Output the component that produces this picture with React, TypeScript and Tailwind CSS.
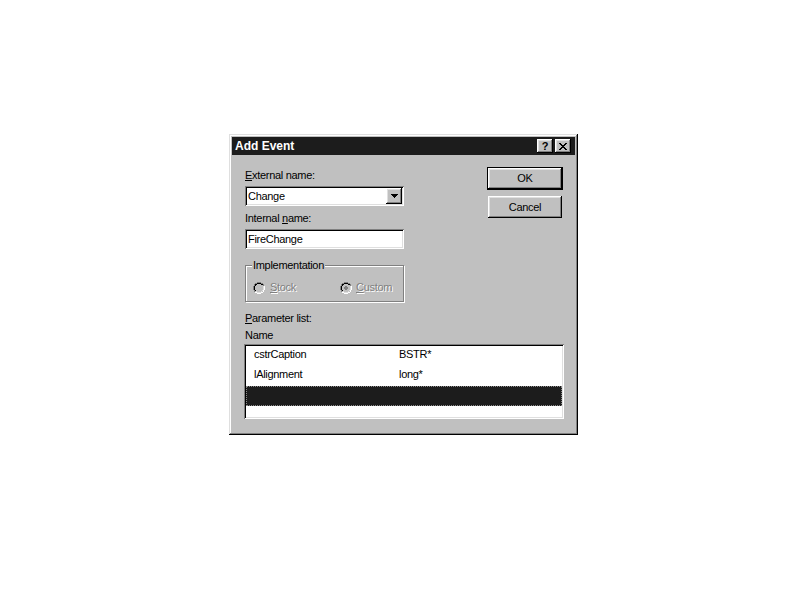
import React from "react";

const raised =
  "shadow-[inset_-1px_-1px_0_#000,inset_1px_1px_0_#fff,inset_-2px_-2px_0_#808080,inset_2px_2px_0_#dfdfdf]";
const sunken =
  "shadow-[inset_1px_1px_0_#808080,inset_-1px_-1px_0_#fff,inset_2px_2px_0_#000,inset_-2px_-2px_0_#dfdfdf]";

function Radio({ checked }: { checked?: boolean }) {
  return (
    <svg width="12" height="12" viewBox="0 0 12 12" shapeRendering="crispEdges">
      <path d="M4 0h4v1H4zM2 1h2v1H2zM8 1h2v1H8zM1 2h1v2H1zM0 4h1v4H0zM1 8h1v2H1z" fill="#808080" />
      <path d="M10 2h1v2h-1z" fill="#808080" />
      <path d="M4 1h4v1H4zM2 2h2v1H2zM8 2h2v1H8zM2 3h1v1H2zM1 4h1v4H1zM2 8h1v1H2z" fill="#000" />
      <path d="M11 4h1v4h-1zM10 8h1v2h-1zM8 10h2v1H8zM4 11h4v1H4zM2 10h2v1H2z" fill="#fff" />
      <path d="M10 4h1v4h-1zM9 8h1v1H9zM8 9h1v1H8zM4 10h4v1H4zM3 9h1v1H3z" fill="#dfdfdf" />
      <path d="M4 2h4v1H4zM3 3h6v1H3zM2 4h8v4H2zM3 8h6v1H3zM4 9h4v1H4z" fill="#c0c0c0" />
      {checked && <path d="M5 4h2v1H5zM4 5h4v2H4zM5 7h2v1H5z" fill="#808080" />}
    </svg>
  );
}

export default function App() {
  return (
    <div
      className="min-h-[600px] w-[800px] bg-white pl-[229px] pt-[134px] text-[11px] leading-[13px] tracking-[-0.3px] text-black"
      style={{ fontFamily: '"Liberation Sans", Arial, sans-serif' }}
    >
      <div className="flex h-[301px] w-[349px] flex-col bg-[#c0c0c0] p-[3px] shadow-[inset_-1px_-1px_0_#000,inset_1px_1px_0_#dfdfdf,inset_-2px_-2px_0_#808080,inset_2px_2px_0_#fff]">
        {/* Title bar */}
        <div className="flex h-[18px] items-center justify-between bg-[#1c1c1c] pl-[3px] pr-[4px]">
          <span className="text-[12px] font-bold tracking-normal text-white">Add Event</span>
          <div className="flex gap-[2px]">
            <div className={`flex h-[14px] w-[16px] items-center justify-center bg-[#c0c0c0] ${raised}`}>
              <span className="text-[11px] font-bold leading-[11px] tracking-normal">?</span>
            </div>
            <div className={`flex h-[14px] w-[16px] items-center justify-center bg-[#c0c0c0] ${raised}`}>
              <svg width="8" height="7" viewBox="0 0 8 7" shapeRendering="crispEdges">
                <path
                  d="M0 0h2v1H0zM6 0h2v1H6zM1 1h2v1H1zM5 1h2v1H5zM2 2h4v1H2zM3 3h2v1H3zM2 4h4v1H2zM1 5h2v1H1zM5 5h2v1H5zM0 6h2v1H0zM6 6h2v1H6z"
                  fill="#000"
                />
              </svg>
            </div>
          </div>
        </div>

        {/* Body */}
        <div className="flex flex-col pl-[12px] pr-[12px]">
          <div className="flex">
            {/* Left column */}
            <div className="ml-[1px] flex w-[159px] flex-col">
              <div className="mt-[14px]">
                <span className="underline">E</span>xternal name:
              </div>
              <div className={`mt-[4px] flex h-[20px] items-center bg-white p-[2px] ${sunken}`}>
                <span className="flex-1 pl-[1px]">Change</span>
                <div className={`flex h-[16px] w-[16px] items-center justify-center bg-[#c0c0c0] ${raised}`}>
                  <svg width="7" height="4" viewBox="0 0 7 4" shapeRendering="crispEdges">
                    <path d="M0 0h7v1H0zM1 1h5v1H1zM2 2h3v1H2zM3 3h1v1H3z" fill="#000" />
                  </svg>
                </div>
              </div>
              <div className="mt-[6px]">
                Internal <span className="underline">n</span>ame:
              </div>
              <div className={`mt-[4px] flex h-[20px] items-center bg-white p-[2px] ${sunken}`}>
                <span className="pl-[1px]">FireChange</span>
              </div>

              {/* Group box */}
              <div className="relative mt-[16px] h-[37px] border border-[#808080] shadow-[1px_1px_0_#fff,inset_1px_1px_0_#fff]">
                <span className="absolute left-[6px] top-[-7px] bg-[#c0c0c0] px-[1px]">Implementation</span>
                <div className="flex h-full items-center pl-[7px] pt-[8px]">
                  <div className="flex w-[87px] items-center gap-[5px]">
                    <Radio />
                    <span className="text-[#808080] [text-shadow:1px_1px_0_#fff]">
                      <span className="underline">S</span>tock
                    </span>
                  </div>
                  <div className="flex items-center gap-[4px]">
                    <Radio checked />
                    <span className="text-[#808080] [text-shadow:1px_1px_0_#fff]">
                      <span className="underline">C</span>ustom
                    </span>
                  </div>
                </div>
              </div>
            </div>

            {/* Right column */}
            <div className="ml-auto mt-[12px] flex w-[76px] flex-col">
              <div className="h-[23px] border border-black">
                <div className={`flex h-full items-center justify-center bg-[#c0c0c0] ${raised}`}>OK</div>
              </div>
              <div className={`mx-[1px] mt-[6px] flex h-[22px] items-center justify-center bg-[#c0c0c0] ${raised}`}>
                Cancel
              </div>
            </div>
          </div>

          {/* Parameter list */}
          <div className="ml-[1px] mt-[10px]">
            <span className="underline">P</span>arameter list:
          </div>
          <div className="ml-[1px] mt-[4px]">Name</div>
          <div className={`mt-[2px] h-[75px] w-[320px] bg-white p-[2px] ${sunken}`}>
            <div className="flex h-[20px] pl-[8px] pt-[2px]">
              <span className="w-[145px]">cstrCaption</span>
              <span>BSTR*</span>
            </div>
            <div className="flex h-[20px] pl-[8px] pt-[2px]">
              <span className="w-[145px]">lAlignment</span>
              <span>long*</span>
            </div>
            <div className="h-[20px] border border-dotted border-[#8a8a8a] bg-[#1c1c1c]" />
          </div>
        </div>
      </div>
    </div>
  );
}
